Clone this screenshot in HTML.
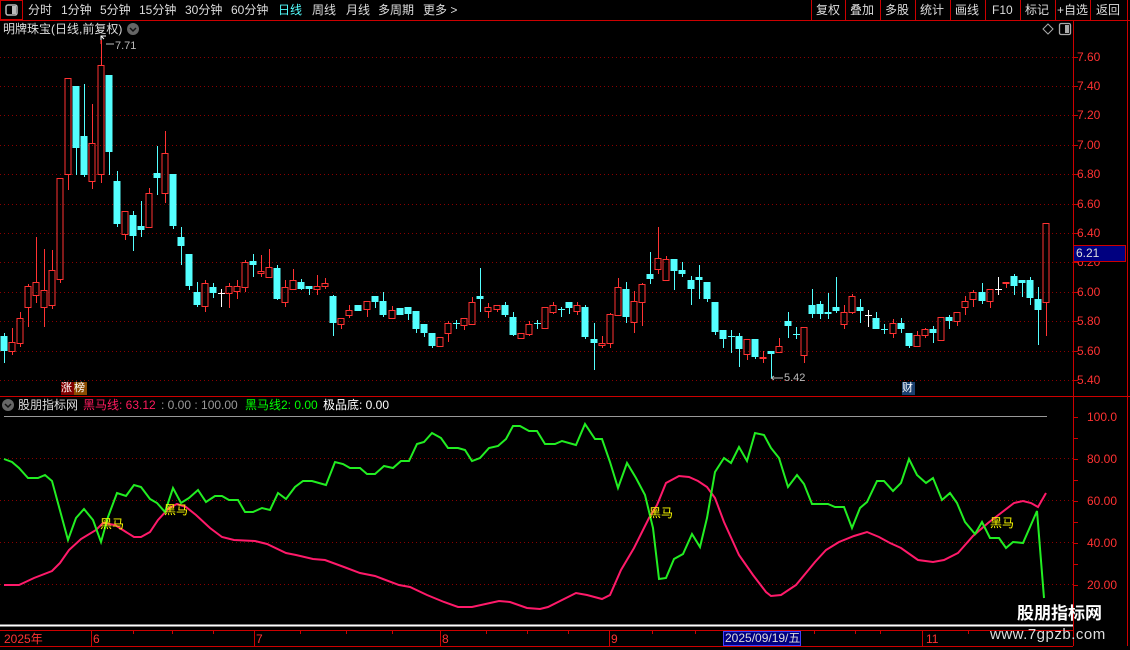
<!DOCTYPE html>
<html><head><meta charset="utf-8">
<style>
*{margin:0;padding:0;box-sizing:border-box}
body{width:1130px;height:650px;background:#000;overflow:hidden;position:relative;font-family:"Liberation Sans","Noto Sans CJK SC",sans-serif;font-size:12px;color:#ddd}
.a{position:absolute;white-space:nowrap;line-height:14px}
svg{position:absolute;left:0;top:0}
</style></head><body>
<svg id="s" width="1130" height="650" xmlns="http://www.w3.org/2000/svg"></svg>
<!-- top menu -->
<div class="a" style="left:28px;top:3px">分时</div>
<div class="a" style="left:61px;top:3px">1分钟</div>
<div class="a" style="left:100px;top:3px">5分钟</div>
<div class="a" style="left:139px;top:3px">15分钟</div>
<div class="a" style="left:185px;top:3px">30分钟</div>
<div class="a" style="left:231px;top:3px">60分钟</div>
<div class="a" style="left:278px;top:3px;color:#54ffff">日线</div>
<div class="a" style="left:312px;top:3px">周线</div>
<div class="a" style="left:346px;top:3px">月线</div>
<div class="a" style="left:378px;top:3px">多周期</div>
<div class="a" style="left:423px;top:3px">更多 &gt;</div>
<div class="a" style="left:816px;top:3px">复权</div>
<div class="a" style="left:850px;top:3px">叠加</div>
<div class="a" style="left:885px;top:3px">多股</div>
<div class="a" style="left:920px;top:3px">统计</div>
<div class="a" style="left:955px;top:3px">画线</div>
<div class="a" style="left:992px;top:3px">F10</div>
<div class="a" style="left:1025px;top:3px">标记</div>
<div class="a" style="left:1057px;top:3px">+自选</div>
<div class="a" style="left:1096px;top:3px">返回</div>
<div class="a" style="left:3px;top:22px">明牌珠宝(日线,前复权)</div>
<div class="a" style="left:115px;top:39px;color:#bbb;font-size:11px">7.71</div>
<div class="a" style="left:784px;top:371px;color:#bbb;font-size:11px">5.42</div>
<div class="a" style="left:61px;top:382px;background:#800000;color:#fff;width:13px;height:13px;font-size:11px;line-height:13px">涨</div>
<div class="a" style="left:74px;top:382px;background:#8a4a00;color:#fff;width:13px;height:13px;font-size:11px;line-height:13px">榜</div>
<div class="a" style="left:902px;top:382px;background:#1a3f6e;color:#fff;width:13px;height:13px;font-size:11px;line-height:13px">财</div>
<!-- price labels -->
<div class="a" style="left:1077px;top:50px;color:#ff3232">7.60</div>
<div class="a" style="left:1077px;top:79px;color:#ff3232">7.40</div>
<div class="a" style="left:1077px;top:108px;color:#ff3232">7.20</div>
<div class="a" style="left:1077px;top:138px;color:#ff3232">7.00</div>
<div class="a" style="left:1077px;top:167px;color:#ff3232">6.80</div>
<div class="a" style="left:1077px;top:197px;color:#ff3232">6.60</div>
<div class="a" style="left:1077px;top:226px;color:#ff3232">6.40</div>
<div class="a" style="left:1077px;top:255px;color:#ff3232">6.20</div>
<div class="a" style="left:1077px;top:285px;color:#ff3232">6.00</div>
<div class="a" style="left:1077px;top:314px;color:#ff3232">5.80</div>
<div class="a" style="left:1077px;top:344px;color:#ff3232">5.60</div>
<div class="a" style="left:1077px;top:373px;color:#ff3232">5.40</div>
<div class="a" style="left:1073px;top:245px;width:53px;height:17px;background:#000080;border:1px solid #c00;color:#ddd;padding-left:2px;line-height:15px">6.21</div>
<!-- indicator header -->
<div class="a" style="left:18px;top:398px">股朋指标网</div>
<div class="a" style="left:83px;top:398px;color:#ff1a5e">黑马线: 63.12</div>
<div class="a" style="left:161px;top:398px;color:#999">: 0.00 : 100.00</div>
<div class="a" style="left:245px;top:398px;color:#00ff00">黑马线2: 0.00</div>
<div class="a" style="left:323px;top:398px;color:#fff">极品底: 0.00</div>
<div class="a" style="left:1087px;top:410px;color:#ff3232">100.0</div>
<div class="a" style="left:1087px;top:452px;color:#ff3232">80.00</div>
<div class="a" style="left:1087px;top:494px;color:#ff3232">60.00</div>
<div class="a" style="left:1087px;top:536px;color:#ff3232">40.00</div>
<div class="a" style="left:1087px;top:578px;color:#ff3232">20.00</div>
<div class="a" style="left:100px;top:517px;color:#ffff00">黑马</div>
<div class="a" style="left:164px;top:503px;color:#ffff00">黑马</div>
<div class="a" style="left:649px;top:506px;color:#ffff00">黑马</div>
<div class="a" style="left:990px;top:516px;color:#ffff00">黑马</div>
<!-- time axis -->
<div class="a" style="left:4px;top:632px;color:#ff3232">2025年</div>
<div class="a" style="left:93px;top:632px;color:#ff3232">6</div>
<div class="a" style="left:256px;top:632px;color:#ff3232">7</div>
<div class="a" style="left:442px;top:632px;color:#ff3232">8</div>
<div class="a" style="left:611px;top:632px;color:#ff3232">9</div>
<div class="a" style="left:926px;top:632px;color:#ff3232">11</div>
<div class="a" style="left:723px;top:631px;width:78px;height:15px;background:#000080;border:1px solid #4040ff;color:#ddd;line-height:13px;padding-left:1px">2025/09/19/五</div>
<!-- watermark -->
<div class="a" style="left:1017px;top:604px;color:#fff;font-size:17px;font-weight:bold;line-height:20px">股朋指标网</div>
<div class="a" style="left:990px;top:626px;color:#ddd;font-size:15px;line-height:18px;letter-spacing:0.5px">www.7gpzb.com</div>
<script>
const s=document.getElementById('s');let h='';
const L=(x1,y1,x2,y2,c,w,d)=>{h+=`<line x1="${x1}" y1="${y1}" x2="${x2}" y2="${y2}" stroke="${c}" stroke-width="${w||1}"${d?` stroke-dasharray="${d}"`:''}/>`};
// top bar
L(0,20.5,1130,20.5,'#c00');
h+=`<rect x="0.5" y="0.5" width="22" height="19" fill="none" stroke="#c00"/><rect x="6" y="5" width="11" height="10" rx="2" fill="none" stroke="#bbb" stroke-width="1.5"/><rect x="12" y="6" width="4" height="8" fill="#bbb"/>`;
[811,845,880,915,950,985,1020,1055,1090,1127].forEach(x=>L(x+.5,0,x+.5,20,'#c00'));
h+=`<circle cx="133" cy="29" r="6" fill="#666"/><path d="M130 28l3 3 3-3" stroke="#111" stroke-width="1.5" fill="none"/>`;
h+=`<path d="M1048 24l5 5-5 5-5-5z" fill="none" stroke="#aaa"/><rect x="1059.5" y="23.5" width="11" height="11" rx="1.5" fill="none" stroke="#aaa" stroke-width="1.3"/><rect x="1065" y="25" width="4" height="8" fill="#aaa"/>`;
// grid price
for(let k=0;k<12;k++){const y=Math.round(380-k*29.4)+.5;L(0,y,1073,y,'#8a0000',1,'1 3');L(1073,y,1078,y,'#c00')}
L(1073.5,20,1073.5,646,'#c00');L(1127.5,20,1127.5,646,'#c00');
L(0,396.5,1130,396.5,'#c00');
h+=`<circle cx="8" cy="405" r="6" fill="#666"/><path d="M5 404l3 3 3-3" stroke="#111" stroke-width="1.5" fill="none"/>`;
// markers
h+=`<path d="M101 40v-4h5M101 36l3 3" stroke="#fff" fill="none"/><line x1="101" y1="40" x2="101" y2="44" stroke="#ff3232"/><path d="M106 44h8" stroke="#bbb"/>`;
h+=`<path d="M771 378h12M771 378l3-2M771 378l3 2" stroke="#bbb" fill="none"/>`;
// candles
const C=[[4,336,351,333,363,'c'],[12,342,351,328,355,'r'],[20,318,343,312,347,'r'],[28,286,307,284,327,'r'],[36,282,295,237,303,'r'],[44,290,307,249,327,'r'],[52,270,305,250,309,'r'],[60,178,279,178,283,'r'],[68,78,174,78,190,'r'],[76,86,148,86,175,'c'],[84,136,175,84,177,'c'],[92,143,181,104,189,'r'],[101,65,174,40,183,'r'],[109,75,152,75,175,'c'],[117,181,224,171,227,'c'],[125,211,234,211,240,'r'],[133,215,236,211,251,'c'],[141,226,230,201,237,'c'],[149,193,227,188,227,'r'],[157,173,178,146,195,'c'],[165,153,193,131,203,'r'],[173,174,226,174,229,'c'],[181,237,246,227,265,'c'],[189,254,286,254,290,'c'],[197,292,305,282,307,'c'],[205,283,306,280,312,'r'],[213,287,293,283,298,'c'],[221,293,293,289,307,'w'],[229,286,293,283,308,'r'],[237,286,291,280,299,'r'],[245,262,287,260,292,'r'],[253,261,265,254,277,'c'],[261,271,273,255,277,'r'],[269,267,277,249,277,'r'],[277,268,299,265,300,'c'],[285,287,302,280,307,'r'],[293,280,289,269,289,'r'],[301,282,289,279,290,'c'],[309,286,289,286,295,'c'],[317,286,289,275,295,'r'],[325,283,286,278,289,'r'],[333,296,323,295,336,'c'],[341,318,324,318,329,'r'],[349,310,315,305,318,'r'],[358,305,311,305,311,'c'],[367,301,309,301,317,'r'],[375,296,302,296,308,'c'],[383,301,315,292,317,'c'],[392,310,318,306,318,'r'],[400,308,315,308,315,'c'],[408,307,314,307,320,'c'],[416,311,329,311,333,'c'],[424,324,333,324,337,'c'],[432,333,346,333,348,'c'],[440,337,346,337,346,'r'],[448,323,333,321,342,'r'],[456,323,323,320,329,'x'],[464,318,325,318,330,'r'],[472,302,324,297,324,'r'],[480,296,299,268,312,'c'],[488,307,311,303,318,'r'],[497,305,309,305,312,'r'],[505,305,315,302,317,'c'],[513,317,335,312,336,'c'],[521,333,338,333,339,'r'],[529,324,334,321,336,'r'],[537,323,323,320,329,'x'],[545,307,328,307,328,'r'],[553,305,312,302,314,'r'],[561,309,309,307,317,'x'],[569,302,308,302,314,'c'],[577,305,311,302,315,'r'],[585,307,337,305,339,'c'],[594,339,343,323,370,'c'],[602,343,345,336,348,'r'],[610,314,343,313,348,'r'],[618,287,315,278,315,'r'],[626,289,317,282,323,'c'],[634,301,322,291,333,'r'],[642,284,302,283,326,'r'],[650,274,279,252,284,'c'],[658,258,269,227,274,'r'],[666,259,280,256,280,'r'],[674,259,271,259,290,'c'],[682,270,274,262,277,'c'],[691,280,289,276,305,'c'],[699,277,280,265,299,'c'],[707,282,299,282,302,'c'],[715,302,332,302,335,'c'],[723,330,339,330,348,'c'],[731,336,336,330,353,'x'],[739,336,349,333,367,'c'],[747,339,354,339,360,'r'],[755,339,357,339,359,'c'],[763,357,358,351,363,'r'],[771,351,354,351,378,'c'],[779,346,352,338,353,'r'],[788,321,326,312,338,'c'],[796,334,334,327,339,'x'],[804,327,355,327,363,'r'],[812,305,314,289,318,'c'],[820,304,314,301,319,'c'],[828,312,314,293,319,'c'],[836,307,311,277,313,'c'],[844,312,324,305,329,'r'],[852,296,312,294,314,'r'],[860,307,311,299,323,'c'],[868,315,315,310,327,'w'],[876,318,329,312,329,'c'],[884,329,329,324,334,'x'],[893,323,333,319,338,'r'],[901,323,329,318,333,'c'],[909,333,346,333,348,'c'],[917,335,346,331,346,'r'],[925,329,335,328,338,'r'],[933,329,333,326,343,'c'],[941,317,340,317,341,'r'],[949,317,321,315,329,'c'],[957,312,321,312,326,'r'],[965,301,307,296,315,'r'],[973,292,299,290,307,'r'],[982,292,301,283,304,'c'],[990,289,301,289,308,'r'],[998,289,289,277,295,'w'],[1006,282,283,282,288,'r'],[1014,276,286,274,295,'c'],[1022,280,283,280,297,'c'],[1030,280,298,277,305,'c'],[1038,299,310,287,345,'c'],[1046,223,302,223,336,'r']];
C.forEach(([x,a,b,t,l,k])=>{
 const cx=x+.5;
 if(k=='r'){L(cx,t,cx,a,'#ff3232');L(cx,b,cx,l,'#ff3232');h+=`<rect x="${x-3}" y="${a+.5}" width="6" height="${Math.max(b-a,1)}" fill="none" stroke="#ff3232"/>`;}
 else if(k=='c'){L(cx,t,cx,l,'#54ffff');h+=`<rect x="${x-3.5}" y="${a}" width="7" height="${Math.max(b-a,2)}" fill="#54ffff"/>`;}
 else{const c=k=='w'?'#fff':'#54ffff';L(cx,t,cx,l,c);L(x-3,a+.5,x+4,a+.5,c);}
});
// indicator grid
L(4,416.5,1047,416.5,'#999');
[458,500,542,584].forEach(y=>{L(0,y+.5,1073,y+.5,'#8a0000',1,'1 3')});
for(let y=417;y<=600;y+=21)L(1073,y+.5,1078,y+.5,'#c00');
const G=[[4,459],[12,462],[19,468],[28,478],[38,478],[45,475],[52,481],[68,540],[76,518],[84,509],[93,520],[101,542],[108,517],[117,493],[126,496],[134,485],[141,487],[150,499],[157,503],[165,512],[173,488],[181,503],[189,498],[198,490],[206,502],[215,496],[222,496],[229,500],[238,500],[245,512],[253,512],[262,508],[270,510],[278,493],[286,499],[295,487],[303,481],[312,481],[326,485],[335,462],[343,464],[350,468],[360,468],[367,474],[375,474],[384,466],[393,468],[401,461],[409,461],[417,444],[424,442],[432,433],[441,438],[448,448],[458,448],[465,450],[472,461],[480,458],[489,448],[498,446],[506,439],[513,426],[520,426],[529,431],[537,431],[545,444],[555,444],[562,441],[576,445],[585,424],[595,439],[602,439],[610,462],[618,488],[627,463],[636,478],[645,495],[653,528],[659,579],[666,578],[674,559],[683,554],[692,534],[700,547],[707,518],[715,472],[724,458],[731,463],[739,447],[747,461],[755,433],[764,435],[771,448],[779,458],[788,487],[797,475],[804,484],[812,504],[828,504],[835,507],[844,507],[852,528],[860,508],[867,502],[877,481],[884,481],[893,491],[901,483],[909,459],[917,475],[926,483],[933,478],[942,500],[950,493],[957,503],[965,522],[975,534],[982,522],[990,538],[999,538],[1006,548],[1013,542],[1023,543],[1037,511],[1044,598]];
const P=[[4,585],[19,585],[34,578],[52,571],[60,563],[69,550],[81,539],[96,530],[103,523],[115,525],[126,532],[134,537],[141,537],[150,532],[158,520],[169,508],[177,504],[186,507],[196,515],[210,528],[222,537],[234,540],[255,541],[267,544],[286,553],[296,555],[313,559],[325,560],[344,567],[360,573],[375,576],[399,585],[410,587],[427,595],[444,602],[458,607],[472,607],[499,601],[510,602],[527,608],[540,609],[548,607],[576,593],[587,595],[602,599],[610,595],[621,570],[634,548],[649,518],[657,505],[666,483],[679,476],[689,477],[698,481],[707,487],[715,498],[724,522],[739,555],[753,575],[766,592],[771,596],[781,595],[796,585],[815,562],[826,550],[839,542],[854,536],[867,532],[879,537],[890,543],[901,548],[918,560],[933,562],[944,560],[958,553],[973,536],[988,523],[1001,513],[1014,503],[1023,501],[1031,503],[1038,507],[1046,493]];
const pl=a=>a.map(p=>p.join(',')).join(' ');
h+=`<polyline points="${pl(P)}" fill="none" stroke="#ff1a6a" stroke-width="2"/>`;
h+=`<polyline points="${pl(G)}" fill="none" stroke="#22ee22" stroke-width="2"/>`;
// bottom axis
h+=`<rect x="0" y="624.5" width="1073" height="2" fill="#fff"/>`;
L(0,630.5,1073,630.5,'#c00');L(0,646.5,1073,646.5,'#c00');
[91,254,440,609,922].forEach(x=>L(x+.5,631,x+.5,646,'#c00'));
[133,172,213,300,346,392,486,527,568,652,695,740,773,814,855,880,968].forEach(x=>L(x+.5,631,x+.5,634,'#c00'));
s.innerHTML=h;
</script>
</body></html>
